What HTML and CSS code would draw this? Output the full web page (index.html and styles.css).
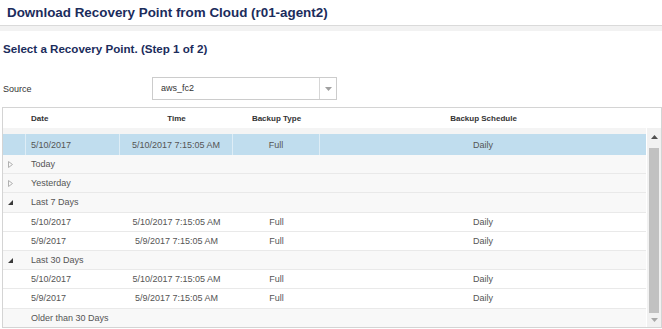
FILE: index.html
```html
<!DOCTYPE html>
<html>
<head>
    <link rel="stylesheet" href="styles.css">
</head>
<body>
<div class="title-bar">
    <h1>Download Recovery Point from Cloud (r01-agent2)</h1>
</div>

<div class="wizard">
    <h2>Select a Recovery Point. (Step 1 of 2)</h2>

    <div class="source-row">
        <label class="source-label">Source</label>
        <div class="combo">
            <span class="combo-text">aws_fc2</span>
            <span class="combo-arrow">
                <svg width="7" height="4" viewBox="0 0 7 4"><path d="M0 0h7L3.5 4z" fill="#a0a0a0"/></svg>
            </span>
        </div>
    </div>

    <div class="grid">
        <div class="grid-header">
            <div></div>
            <div class="cell-left">Date</div>
            <div>Time</div>
            <div>Backup Type</div>
            <div>Backup Schedule</div>
            <div></div>
        </div>

        <div class="grid-body">
            <div class="grid-rows">
                <div class="spacer"></div>

                <div class="row selected">
                    <div></div>
                    <div class="cell-left">5/10/2017</div>
                    <div>5/10/2017 7:15:05 AM</div>
                    <div>Full</div>
                    <div>Daily</div>
                </div>

                <div class="row group">
                    <div class="toggle">
                        <svg width="5" height="7" viewBox="0 0 5 7"><path d="M0.5 0.5L4.5 3.5L0.5 6.5z" fill="none" stroke="#b0b0b0" stroke-width="1"/></svg>
                    </div>
                    <div class="group-label">Today</div>
                </div>
                <div class="row group">
                    <div class="toggle">
                        <svg width="5" height="7" viewBox="0 0 5 7"><path d="M0.5 0.5L4.5 3.5L0.5 6.5z" fill="none" stroke="#b0b0b0" stroke-width="1"/></svg>
                    </div>
                    <div class="group-label">Yesterday</div>
                </div>
                <div class="row group">
                    <div class="toggle">
                        <svg width="5" height="5" viewBox="0 0 5 5"><path d="M5 0V5H0z" fill="#3a3a3a"/></svg>
                    </div>
                    <div class="group-label">Last 7 Days</div>
                </div>
                <div class="row">
                    <div></div>
                    <div class="cell-left">5/10/2017</div>
                    <div>5/10/2017 7:15:05 AM</div>
                    <div>Full</div>
                    <div>Daily</div>
                </div>
                <div class="row">
                    <div></div>
                    <div class="cell-left">5/9/2017</div>
                    <div>5/9/2017 7:15:05 AM</div>
                    <div>Full</div>
                    <div>Daily</div>
                </div>
                <div class="row group">
                    <div class="toggle">
                        <svg width="5" height="5" viewBox="0 0 5 5"><path d="M5 0V5H0z" fill="#3a3a3a"/></svg>
                    </div>
                    <div class="group-label">Last 30 Days</div>
                </div>
                <div class="row">
                    <div></div>
                    <div class="cell-left">5/10/2017</div>
                    <div>5/10/2017 7:15:05 AM</div>
                    <div>Full</div>
                    <div>Daily</div>
                </div>
                <div class="row">
                    <div></div>
                    <div class="cell-left">5/9/2017</div>
                    <div>5/9/2017 7:15:05 AM</div>
                    <div>Full</div>
                    <div>Daily</div>
                </div>
                <div class="row group">
                    <div class="toggle"></div>
                    <div class="group-label">Older than 30 Days</div>
                </div>
            </div>

            <div class="scrollbar">
                <div class="scroll-btn">
                    <svg width="7" height="4" viewBox="0 0 7 4"><path d="M0 4h7L3.5 0z" fill="#505050"/></svg>
                </div>
                <div class="scroll-track">
                    <div class="scroll-thumb"></div>
                </div>
                <div class="scroll-btn">
                    <svg width="7" height="4" viewBox="0 0 7 4"><path d="M0 0h7L3.5 4z" fill="#a8a8a8"/></svg>
                </div>
            </div>
        </div>
    </div>
</div>
</body>
</html>
```

FILE: styles.css
```css
html, body {
    margin: 0;
    background-color: #ffffff;
    font-family: "Liberation Sans", Arial, sans-serif;
    color: #555555;
    overflow: hidden;
}

.title-bar {
    height: 25px;
    border-bottom: 1px solid #dadada;
    box-shadow: 0 5px 0 #f2f2f2;
}

.title-bar h1 {
    margin: 0;
    padding-left: 7px;
    font-size: 13.4px;
    line-height: 25px;
    font-weight: bold;
    color: #1b2c5c;
}

.wizard {
    padding-top: 16px;
}

.wizard h2 {
    margin: 0 0 0 3px;
    font-size: 11.6px;
    line-height: 14px;
    font-weight: bold;
    color: #1b2c5c;
}

.source-row {
    display: flex;
    align-items: center;
    margin-top: 21px;
    padding-left: 3px;
}

.source-label {
    width: 149px;
    font-size: 9px;
    color: #333333;
}

.combo {
    display: flex;
    width: 185px;
    height: 23px;
    box-sizing: border-box;
    border: 1px solid #cccccc;
}

.combo-text {
    flex: 1;
    padding-left: 8px;
    font-size: 9px;
    line-height: 21px;
    color: #333333;
}

.combo-arrow {
    display: flex;
    align-items: center;
    justify-content: center;
    width: 16px;
    border-left: 1px solid #d6d6d6;
}

.grid {
    margin: 7px 0 0 2px;
    border: 1px solid #d4d4d4;
    border-right-width: 1px;
}

.grid-header {
    display: grid;
    grid-template-columns: 23px 94px 113px 87px 1fr 14px;
    height: 20px;
    align-items: center;
    font-size: 8px;
    font-weight: bold;
    color: #333333;
    text-align: center;
}

.cell-left {
    text-align: left;
    padding-left: 5px;
}

.grid-body {
    display: flex;
    height: 199px;
    overflow: hidden;
}

.grid-rows {
    flex: 1;
    background-color: #ffffff;
}

.spacer {
    height: 6px;
    background-color: #f4f4f4;
}

.row {
    display: grid;
    grid-template-columns: 23px 94px 113px 87px 1fr;
    height: 18.2px;
    border-bottom: 1px solid #e9e9e9;
    align-items: center;
    font-size: 9px;
    text-align: center;
}

.row.selected {
    height: 21px;
    background-color: #c0ddee;
    border-bottom: none;
    align-items: stretch;
}

.row.selected > div {
    display: flex;
    align-items: center;
    justify-content: center;
    border-right: 1px solid #deedf6;
}

.row.selected > .cell-left {
    justify-content: flex-start;
}

.row.selected > div:last-child {
    border-right: none;
}

.row.group {
    background-color: #f8f8f8;
}

.toggle {
    display: flex;
    align-items: center;
    padding-left: 5px;
    height: 100%;
}

.group-label {
    grid-column: 2 / -1;
    text-align: left;
    padding-left: 5px;
}

.scrollbar {
    display: flex;
    flex-direction: column;
    width: 14px;
    margin-left: 1px;
    background-color: #f1f1f1;
}

.scroll-btn {
    display: flex;
    align-items: center;
    justify-content: center;
    height: 18px;
}

.scroll-btn:first-child {
    padding-top: 2px;
    height: 18px;
}

.scroll-track {
    flex: 1;
    padding: 4px 2px 0 2px;
}

.scroll-thumb {
    height: 165px;
    background-color: #c1c1c1;
}
```
